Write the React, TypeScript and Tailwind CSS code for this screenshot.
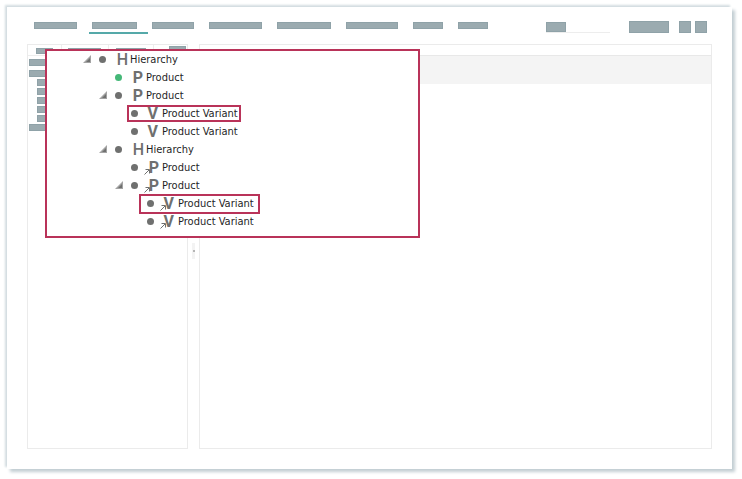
import { useState } from "react";
import clsx from "clsx";

type Kind = "H" | "P" | "V";

interface TreeNode {
  id: string;
  label: string;
  kind: Kind;
  linked?: boolean;
  active?: boolean;
  frame?: "tight" | "wide";
  children?: TreeNode[];
}

const TREE: TreeNode[] = [
  {
    id: "h1",
    label: "Hierarchy",
    kind: "H",
    children: [
      { id: "p1", label: "Product", kind: "P", active: true },
      {
        id: "p2",
        label: "Product",
        kind: "P",
        children: [
          { id: "v1", label: "Product Variant", kind: "V", frame: "tight" },
          { id: "v2", label: "Product Variant", kind: "V" },
        ],
      },
      {
        id: "h2",
        label: "Hierarchy",
        kind: "H",
        children: [
          { id: "p3", label: "Product", kind: "P", linked: true },
          {
            id: "p4",
            label: "Product",
            kind: "P",
            linked: true,
            children: [
              { id: "v3", label: "Product Variant", kind: "V", linked: true, frame: "wide" },
              { id: "v4", label: "Product Variant", kind: "V", linked: true },
            ],
          },
        ],
      },
    ],
  },
];

const NAV = ["w-[43px]", "w-[45px]", "w-[42px]", "w-[53px]", "w-[54px]", "w-[52px]", "w-[30px]", "w-[30px]"];

const KIND_STYLES: Record<Kind, string> = {
  H: "pr-[2px] font-medium",
  P: "pr-[3px] font-bold",
  V: "pr-1 font-bold",
};

function Bar({ className }: { className?: string }) {
  return <span className={clsx("block border border-[#8fa2a8] bg-[#9babb0]", className)} />;
}

function KindIcon({ kind, linked }: { kind: Kind; linked?: boolean }) {
  return (
    <span
      className={clsx(
        "relative ml-[6px] flex h-[18px] w-[18px] items-center justify-end pt-[2px] font-[Roboto,sans-serif] text-[16px] leading-4 text-[#6f706f]",
        KIND_STYLES[kind],
      )}
    >
      {kind}
      {linked && (
        <svg viewBox="0 0 6 6" className="absolute bottom-px left-0 size-[6px]" fill="none" stroke="#6f706f">
          <path d="M0.5 5.5 5 1M1.5 0.5H5.5V4.5" />
        </svg>
      )}
    </span>
  );
}

function TreeItem({ node }: { node: TreeNode }) {
  const [open, setOpen] = useState(true);
  return (
    <li>
      <div className="flex h-[18px] items-center">
        <span className="flex w-4 shrink-0">
          {node.children && (
            <button type="button" aria-label={`Toggle ${node.label}`} aria-expanded={open} onClick={() => setOpen(!open)}>
              <svg viewBox="0 0 8 8" className={clsx("size-2", !open && "-rotate-45")}>
                <path d="M8 0V8H0z" fill="#a3a3a3" />
                <path d="M7 3V7H3z" fill="#6f706f" />
              </svg>
            </button>
          )}
        </span>
        <span className="relative flex items-center">
          <span className={clsx("size-[7px] rounded-full", node.active ? "bg-[#45b878]" : "bg-[#6f706f]")} />
          <KindIcon kind={node.kind} linked={node.linked} />
          <span className="pt-[2px] leading-4 whitespace-nowrap">{node.label}</span>
          {node.frame === "tight" && (
            <span className="absolute top-px -right-[3px] bottom-0 -left-1 border-2 border-[#b93359]" />
          )}
          {node.frame === "wide" && (
            <span className="absolute top-0 -right-[6px] -bottom-[2px] -left-2 border-2 border-[#b93359]" />
          )}
        </span>
      </div>
      {open && node.children && (
        <ul className="pl-4">
          {node.children.map((child) => (
            <TreeItem key={child.id} node={child} />
          ))}
        </ul>
      )}
    </li>
  );
}

function TopBar() {
  return (
    <header className="flex items-start pr-[25px] pl-[27px]">
      <nav className="flex gap-[15px] pt-px">
        {NAV.map((width, i) => (
          <a key={i} href="#" aria-label={`Section ${i + 1}`} className="relative block">
            <Bar className={clsx("h-[7px]", width)} />
            {i === 1 && <span className="absolute top-[10px] -left-[3px] h-[2px] w-[59px] bg-[#55a9a9]" />}
          </a>
        ))}
      </nav>
      <div className="ml-auto flex">
        <div className="mt-px mr-[19px] flex w-16 items-end border-b border-[#ededed]">
          <Bar className="h-[10px] w-5" />
        </div>
        <Bar className="mr-[10px] h-3 w-10" />
        <Bar className="mr-1 size-3" />
        <Bar className="size-3" />
      </div>
    </header>
  );
}

function Sidebar() {
  return (
    <aside className="w-[161px] shrink-0 border border-[#ebebeb]">
      <div className="flex h-[11px] border-b border-[#ededed]">
        <div className="w-[34px] border-r border-[#ededed] pt-[3px] pl-2">
          <Bar className="h-[6px] w-[17px]" />
        </div>
        <div className="w-[47px] border-r border-[#ededed] pt-[3px] pl-[6px]">
          <Bar className="h-[6px] w-[33px]" />
        </div>
        <div className="w-[45px] border-r border-[#ededed] pt-[3px] pl-[7px]">
          <Bar className="h-[6px] w-[30px]" />
        </div>
        <div className="pt-px pl-[15px]">
          <Bar className="h-2 w-[17px]" />
        </div>
      </div>
      <div className="flex flex-col pt-[3px] pl-px">
        <Bar className="h-[7px] w-20" />
        <Bar className="mt-1 h-[7px] w-20" />
        <div className="flex flex-col gap-[2px] py-[2px] pl-2">
          <Bar className="h-[7px] w-20" />
          <Bar className="h-[7px] w-20" />
          <Bar className="h-[7px] w-20" />
          <Bar className="h-[7px] w-20" />
          <Bar className="h-[7px] w-20" />
        </div>
        <Bar className="h-[7px] w-20" />
      </div>
    </aside>
  );
}

export default function App() {
  return (
    <div className="relative min-h-screen bg-white pt-[7px] pr-[10px] pb-[10px] pl-[7px] font-['DejaVu_Sans_Condensed','Noto_Sans',sans-serif] text-[11px] text-[#1f1f1f]">
      <div className="flex min-h-[calc(100vh-17px)] flex-col bg-white pt-[14px] pb-5 shadow-[-2px_-2px_2px_#d3dce0,3px_3px_3px_#c3ced3]">
        <TopBar />
        <div className="mt-[11px] flex grow pr-5 pl-5">
          <Sidebar />
          <div className="flex w-[11px] flex-col items-center pt-[199px]">
            <button type="button" aria-label="Collapse sidebar" className="flex h-4 w-[3px] items-center justify-center bg-[#f3f3f3]">
              <span className="size-[2px] bg-[#b5b5b5]" />
            </button>
          </div>
          <main className="grow border border-[#ebebeb]">
            <div className="h-[11px] border-b border-[#e8e8e8]" />
            <div className="h-7 bg-[#f4f4f4]" />
          </main>
        </div>
      </div>

      <section className="absolute top-[49px] left-[45px] w-[375px] border-2 border-[#b93359] bg-white pb-[6px] pl-9">
        <ul className="-mt-px">
          {TREE.map((node) => (
            <TreeItem key={node.id} node={node} />
          ))}
        </ul>
      </section>
    </div>
  );
}
